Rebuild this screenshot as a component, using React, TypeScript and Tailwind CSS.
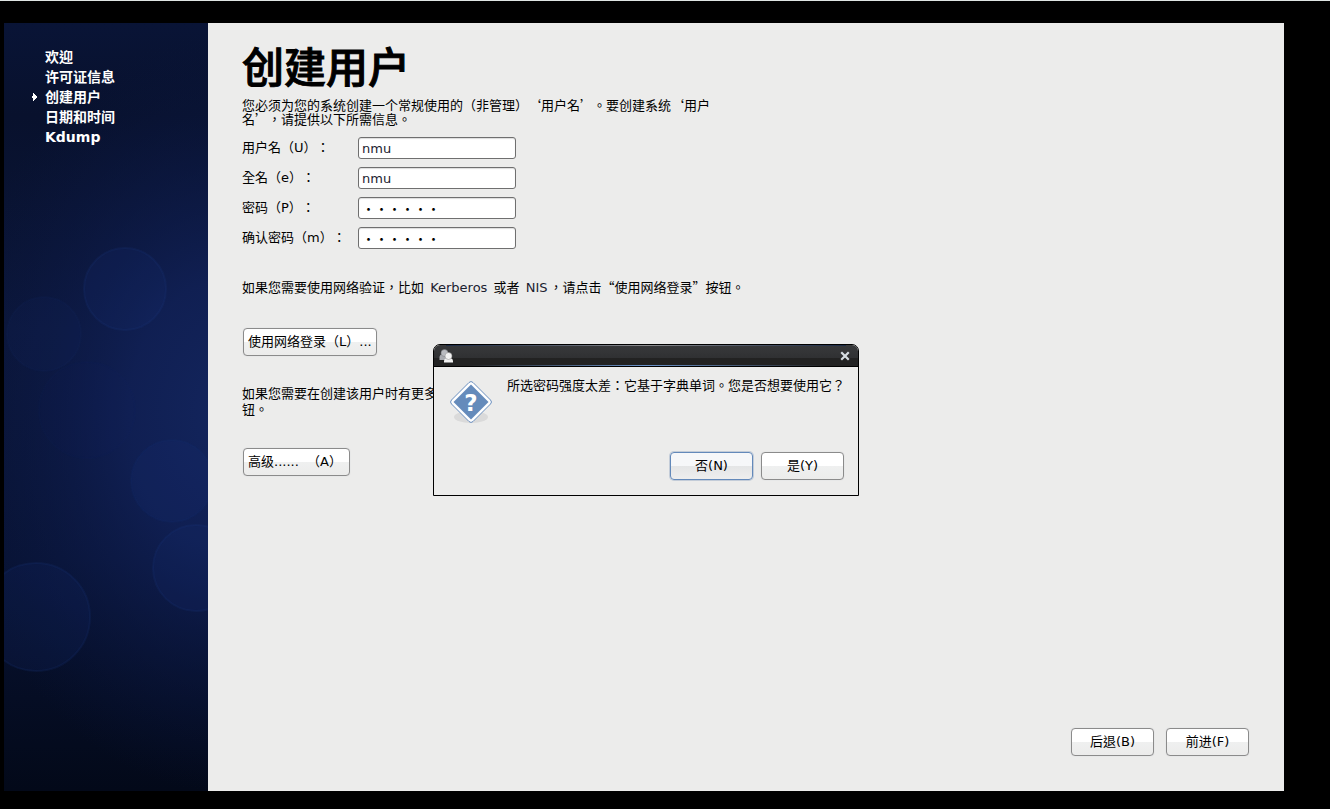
import React, { useState } from "react";

const steps = ["欢迎", "许可证信息", "创建用户", "日期和时间", "Kdump"];

const fields = [
  { id: "username", label: "用户名（U）：", type: "text", value: "nmu" },
  { id: "fullname", label: "全名（e）：", type: "text", value: "nmu" },
  { id: "password", label: "密码（P）：", type: "password", value: "······" },
  { id: "confirm", label: "确认密码（m）：", type: "password", value: "······" },
];

const Button = ({ children, className = "", focused = false, onClick }: {
  children: React.ReactNode;
  className?: string;
  focused?: boolean;
  onClick?: () => void;
}) => (
  <button
    type="button"
    onClick={onClick}
    className={`h-7 rounded-[4px] border bg-linear-to-b whitespace-pre ${
      focused
        ? "border-[#6389ba] from-[#f6f7f9] from-50% via-[#e4e5e6] via-50% to-[#eeeeee] shadow-[0_0_0_1px_#c3ccd8]"
        : "border-[#8b8b8b] from-white from-50% via-[#eff0f0] via-50% to-[#ececeb] shadow-[0_0_1px_#c4c6ca]"
    } ${className}`}
  >
    {children}
  </button>
);

const Latin = ({ children }: { children: React.ReactNode }) => (
  <span className="mx-0.5 text-[#1b2230]">{children}</span>
);

const SidebarArt = () => (
  <svg className="absolute inset-0 h-full w-full" viewBox="0 0 204 768" preserveAspectRatio="none" aria-hidden="true">
    <defs>
      <linearGradient id="base" x1="0" y1="0" x2="0" y2="1">
        <stop offset="0" stopColor="#091436" />
        <stop offset="0.12" stopColor="#08112d" />
        <stop offset="0.4" stopColor="#0b1639" />
        <stop offset="0.7" stopColor="#081334" />
        <stop offset="1" stopColor="#030919" />
      </linearGradient>
      <radialGradient id="glow" gradientUnits="userSpaceOnUse" cx="225" cy="390" r="380" gradientTransform="translate(225 390) scale(0.75 1) translate(-225 -390)">
        <stop offset="0" stopColor="#13255d" />
        <stop offset="0.35" stopColor="#112157" stopOpacity="0.85" />
        <stop offset="1" stopColor="#0a1640" stopOpacity="0" />
      </radialGradient>
    </defs>
    <rect width="204" height="768" fill="url(#base)" />
    <rect width="204" height="768" fill="url(#glow)" />
    <g fill="#17307a" fillOpacity="0.16" stroke="#1c3c8a" strokeOpacity="0.16" strokeWidth="2">
      <circle cx="121" cy="266" r="41" />
      <circle cx="40" cy="311" r="37" fillOpacity="0.08" strokeOpacity="0.06" />
      <circle cx="83" cy="387" r="48" fillOpacity="0.05" strokeOpacity="0.04" />
      <circle cx="168" cy="458" r="41" strokeOpacity="0.08" />
      <circle cx="192" cy="545" r="43" />
      <circle cx="32" cy="594" r="54" />
    </g>
  </svg>
);

const QuestionIcon = () => (
  <svg className="h-12 w-12 shrink-0" viewBox="0 0 48 48" aria-hidden="true">
    <ellipse cx="24" cy="39" rx="17" ry="6" fill="#dadada" />
    <path d="M22 4.500Q24 2.500 26 4.500L43.500 22Q45.500 24 43.500 26L26 43.500Q24 45.500 22 43.500L4.500 26Q2.500 24 4.500 22Z" fill="#fff" stroke="#6a8fbf" />
    <path d="M24 6.500L41.500 24L24 41.500L6.500 24Z" fill="#658bbb" />
    <text x="24" y="33" textAnchor="middle" fontSize="23" fontWeight="bold" fill="#fff" fontFamily="DejaVu Sans">?</text>
  </svg>
);

const UsersIcon = () => (
  <svg className="h-4 w-4" viewBox="0 0 16 16" aria-hidden="true">
    <path d="M0.500 12V9Q1 6 4 6H8V12Z" fill="#a9abb0" />
    <circle cx="5.500" cy="5" r="3.500" fill="#b9bbc0" stroke="#77797c" strokeWidth="0.500" />
    <path d="M5 14.500V13Q5 10.500 7 10.500H12Q14 10.500 14 13V14.500Z" fill="#f1f1f1" />
    <circle cx="9.500" cy="8" r="3.500" fill="#f3f3f3" stroke="#888" strokeWidth="0.500" />
  </svg>
);

const Dialog = ({ onClose }: { onClose: () => void }) => (
  <div
    role="dialog"
    aria-modal="true"
    className="absolute top-[321px] left-[429px] w-[426px] rounded-t-[7px] border border-black bg-[#ececeb]"
  >
    <div className="relative flex h-[22px] items-center justify-between rounded-t-[6px] border-b border-black bg-linear-to-b from-[#38393b] from-0% via-[#303133] via-60% to-[#222] to-60% px-[5px]">
      <div className="absolute inset-x-3 top-0 h-px bg-linear-to-r from-[#1b2a45] via-[#8b8b8d] to-[#1b2a45]" />
      <div className="absolute inset-x-8 bottom-0 h-px bg-linear-to-r from-transparent via-[#6b94cc] to-transparent" />
      <UsersIcon />
      <button type="button" aria-label="关闭" onClick={onClose} className="flex h-4 w-4 items-center justify-center">
        <svg className="h-[10px] w-[10px]" viewBox="0 0 10 10">
          <path d="M2 2L8 8M8 2L2 8" stroke="#d7dde2" strokeWidth="2.200" strokeLinecap="square" />
        </svg>
      </button>
    </div>
    <div className="flex gap-3 px-[13px] pt-[11px]">
      <QuestionIcon />
      <p className="whitespace-nowrap">所选密码强度太差：它基于字典单词。您是否想要使用它？</p>
    </div>
    <div className="flex justify-end gap-2 px-[14px] pt-[26px] pb-[15px]">
      <Button focused onClick={onClose} className="w-[83px]">否(N)</Button>
      <Button onClick={onClose} className="w-[83px]">是(Y)</Button>
    </div>
  </div>
);

const App = () => {
  const [values, setValues] = useState<string[]>(fields.map((f) => f.value));
  const [open, setOpen] = useState<boolean>(true);

  const change = (i: number, text: string) => {
    setValues((prev) => prev.map((v, n) => (n === i ? text : v)));
  };

  return (
    <div className="flex min-h-screen flex-col border-t border-[#dfe5e3] bg-black pt-[22px] pr-[46px] pb-[18px] pl-1 font-['DejaVu_Sans','Noto_Sans_CJK_TC',sans-serif] text-[13px] leading-4 text-black [text-spacing-trim:space-all]">
      <div className="relative flex grow">
        <nav className="relative w-[204px] shrink-0 text-white">
          <SidebarArt />
          <ul className="relative pt-6 pl-[28px] text-[14px] leading-5 font-bold">
            {steps.map((step) => (
              <li key={step} className="flex items-center">
                <span className="w-[13px]">
                  {step === "创建用户" && (
                    <svg className="h-2 w-[5px]" viewBox="0 0 5 8" shapeRendering="crispEdges" aria-hidden="true">
                      <path d="M1 0H2V1H3V2H4V3H5V5H4V6H3V7H2V8H1V5H0V3H1Z" fill="#fff" />
                    </svg>
                  )}
                </span>
                {step}
              </li>
            ))}
          </ul>
        </nav>

        <main className="flex grow flex-col bg-[#ececeb] pt-4 pr-[35px] pb-[35px] pl-[34px]">
          <h1 className="text-[42px] leading-[59px] font-medium [-webkit-text-stroke:1px_black]">创建用户</h1>
          <p className="w-[480px] font-['Noto_Sans_CJK_TC',sans-serif] leading-[14px]">
            您必须为您的系统创建一个常规使用的（非管理）‘用户名’。要创建系统‘用户名’，请提供以下所需信息。
          </p>

          <form className="flex flex-col gap-2 pt-[11px]">
            {fields.map((f, i) => (
              <div key={f.id} className="flex items-center">
                <label htmlFor={f.id} className="w-[116px] whitespace-nowrap">{f.label}</label>
                <input
                  id={f.id}
                  type="text"
                  value={values[i]}
                  onChange={(e) => change(i, e.target.value)}
                  className={`h-[22px] w-[158px] rounded-[3px] border border-[#6f6f6f] bg-white px-[3px] shadow-[inset_0_1px_1px_#dcdcdc] outline-none ${
                    f.type === "password" ? "font-['Noto_Sans_CJK_TC',sans-serif]" : "text-[#1b2230]"
                  }`}
                />
              </div>
            ))}
          </form>

          <p className="pt-[30px]">
            如果您需要使用网络验证，比如 <Latin>Kerberos</Latin> 或者 <Latin>NIS</Latin>，请点击
            <span className="font-['Noto_Sans_CJK_TC',sans-serif]">“使用网络登录”</span>按钮。
          </p>
          <div className="pt-8 pl-px">
            <Button className="px-1">使用网络登录（L）...</Button>
          </div>

          <p className="pt-[30px]">
            如果您需要在创建该用户时有更多
            <br />
            钮。
          </p>
          <div className="pt-[30px] pl-px">
            <Button className="w-[107px] pl-1 text-left">{"高级......  （A）"}</Button>
          </div>

          <div className="mt-auto flex justify-end gap-3">
            <Button className="w-[83px]">后退(B)</Button>
            <Button className="w-[83px]">前进(F)</Button>
          </div>
        </main>

        {open && <Dialog onClose={() => setOpen(false)} />}
      </div>
    </div>
  );
};

export default App;
